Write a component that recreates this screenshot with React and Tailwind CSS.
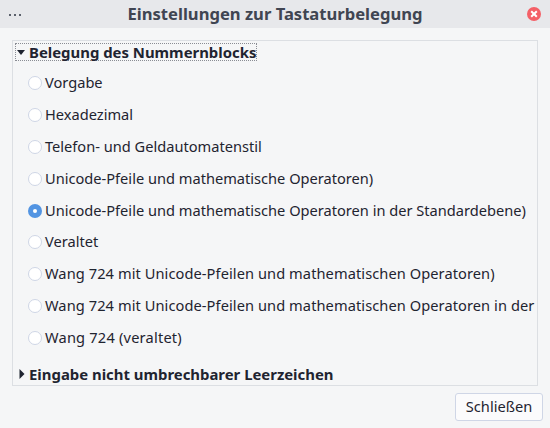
import React from 'react';

const options = [
    'Vorgabe',
    'Hexadezimal',
    'Telefon- und Geldautomatenstil',
    'Unicode-Pfeile und mathematische Operatoren)',
    'Unicode-Pfeile und mathematische Operatoren in der Standardebene)',
    'Veraltet',
    'Wang 724 mit Unicode-Pfeilen und mathematischen Operatoren)',
    'Wang 724 mit Unicode-Pfeilen und mathematischen Operatoren in der',
    'Wang 724 (veraltet)',
];

const Radio = ({ checked }) => (
    checked ? (
        <span className="w-[14px] h-[14px] rounded-full bg-[#5294e2] flex items-center justify-center shrink-0">
            <span className="w-[4px] h-[4px] rounded-full bg-white"></span>
        </span>
    ) : (
        <span className="w-[14px] h-[14px] rounded-full bg-white border border-[#cfd6e6] shrink-0"></span>
    )
);

const labelClass = (label) => {
    if (label.startsWith('Wang 724 mit')) return 'text-[14.62px] tracking-[0.08px]';
    if (label.startsWith('Wang 724 (')) return 'text-[14.62px] tracking-[0.2px]';
    return 'text-[14.62px]';
};

const App = () => {
    return (
        <div className="w-[550px] h-[428px] bg-[#f5f6f7] text-[#1f2430] flex flex-col overflow-hidden font-['Noto_Sans',sans-serif]">
            {/* Titlebar */}
            <div className="h-[28px] bg-[#e7e8eb] flex items-center pl-[9px] pr-[9px] shrink-0">
                <div className="w-[26px] flex gap-[3px] mt-[1px]">
                    <span className="w-[2px] h-[2px] bg-[#5c616c]"></span>
                    <span className="w-[2px] h-[2px] bg-[#5c616c]"></span>
                    <span className="w-[2px] h-[2px] bg-[#5c616c]"></span>
                </div>
                <span className="flex-1 text-center text-[16.6px] font-bold text-[#404552] whitespace-nowrap">Einstellungen zur Tastaturbelegung</span>
                <span className="w-[14px] h-[14px] ml-[12px] rounded-full bg-[#f46067] flex items-center justify-center">
                    <svg width="8" height="8" viewBox="0 0 8 8">
                        <path d="M1.2 1.2L6.8 6.8M6.8 1.2L1.2 6.8" stroke="#fff" strokeWidth="2" />
                    </svg>
                </span>
            </div>

            {/* Expanders */}
            <div className="mx-[12px] mt-[12px] w-[526px] h-[346px] border border-[#dcdfe3] flex flex-col overflow-hidden">
                <div className="mt-[2px] ml-[2px] w-fit h-[18px] flex items-center border border-dotted border-[#8a8d94] pl-[1px]">
                    <svg width="8" height="5" viewBox="0 0 8 5" className="mr-[4px]">
                        <path d="M0 0H8L4 5Z" fill="#1f2430" />
                    </svg>
                    <span className="text-[14.9px] font-bold whitespace-nowrap">Belegung des Nummernblocks</span>
                </div>
                <div className="flex flex-col mt-[6px] ml-[15px]">
                    {options.map((label) => (
                        <div key={label} className="h-[31.9px] flex items-center gap-[3px] whitespace-nowrap">
                            <Radio checked={label.endsWith('Standardebene)')} />
                            <span className={labelClass(label)}>{label}</span>
                        </div>
                    ))}
                </div>
                <div className="mt-[10px] ml-[6px] h-[20px] flex items-center">
                    <svg width="6" height="10" viewBox="0 0 6 10" className="mr-[4px]">
                        <path d="M0.5 0L5.5 5L0.5 10Z" fill="#1f2430" />
                    </svg>
                    <span className="text-[14.9px] font-bold whitespace-nowrap">Eingabe nicht umbrechbarer Leerzeichen</span>
                </div>
            </div>

            {/* Footer */}
            <div className="flex justify-end mt-[7px] mr-[7px]">
                <button className="w-[88px] h-[28px] rounded-[3px] bg-[#fbfbfc] border border-[#cfd6e6] text-[14.62px] text-[#1f2430]">
                    Schließen
                </button>
            </div>
        </div>
    );
};

export default App;
